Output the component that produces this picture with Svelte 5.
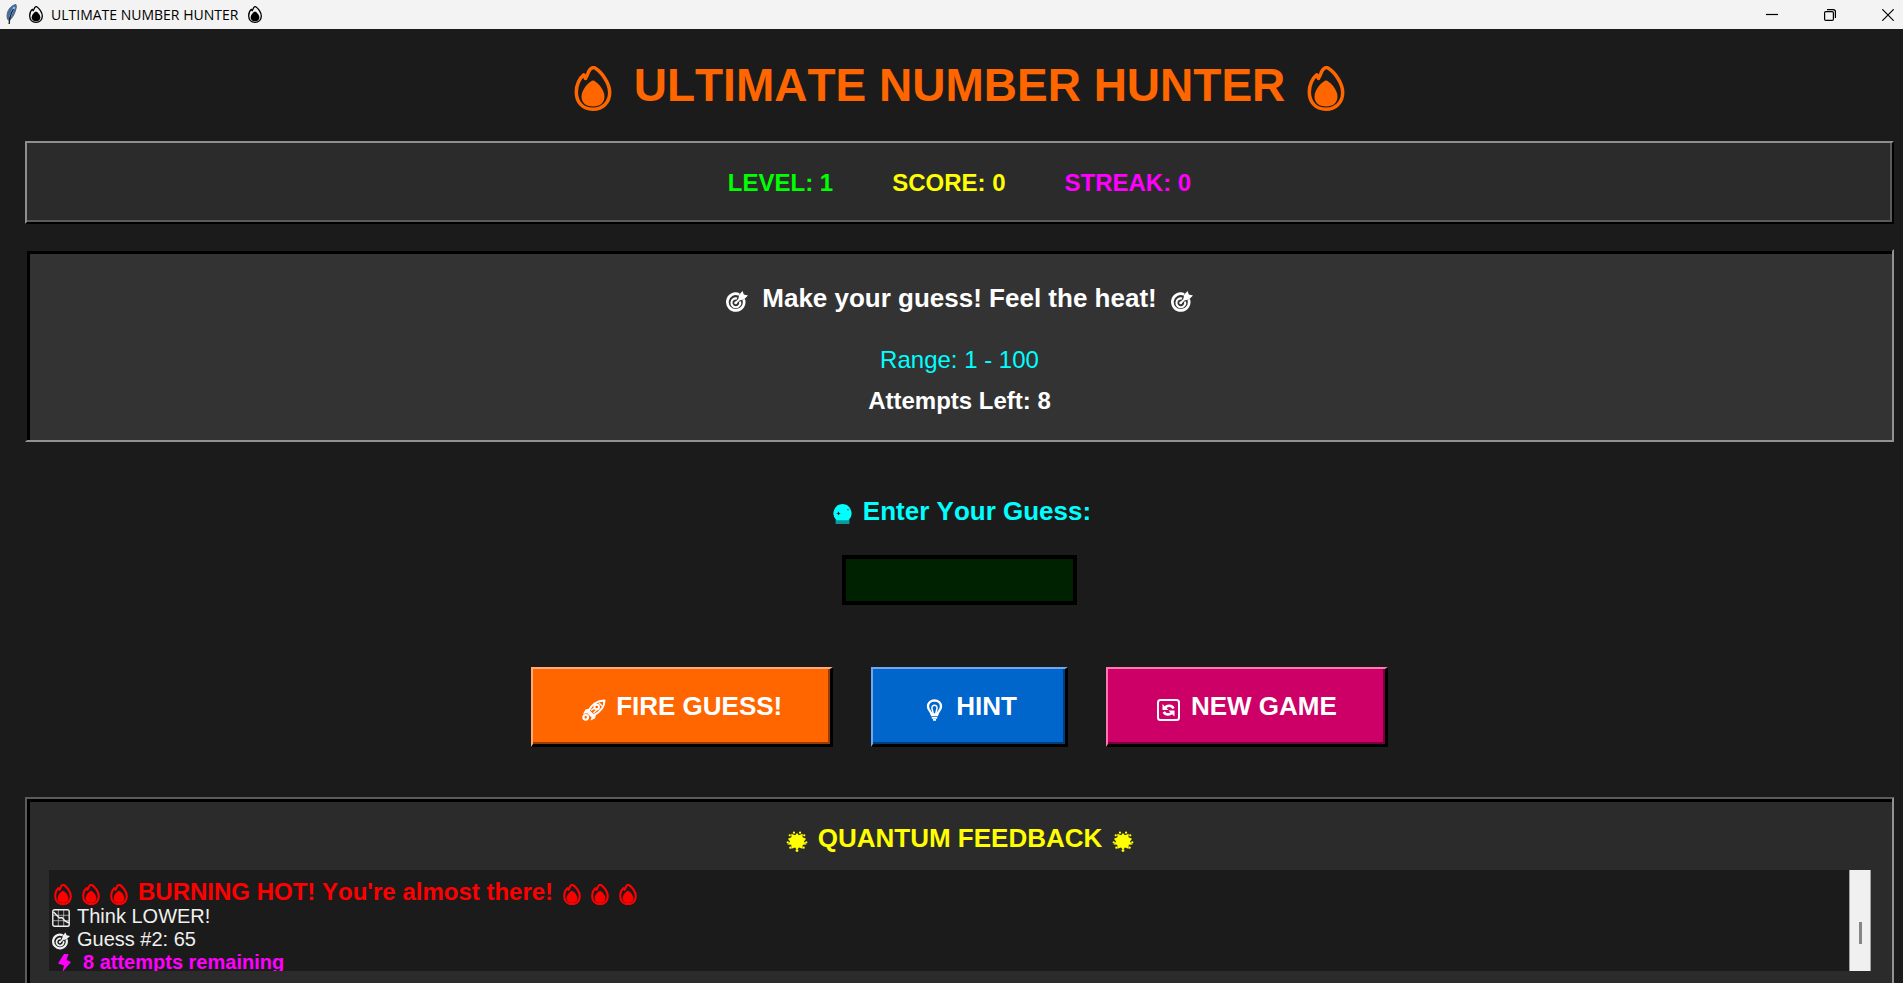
<script>
  let guess = $state('');
  const stats = [
    { label: 'LEVEL', value: 1, tone: 'green' },
    { label: 'SCORE', value: 0, tone: 'yellow' },
    { label: 'STREAK', value: 0, tone: 'magenta' }
  ];
</script>

{#snippet fire(size)}
  <svg class="icon {size}" viewBox="0 0 37 45" aria-hidden="true">
    <path class="outline" d="M18 1.800C15.500 2.500 14.200 5 13 8.500L11 12.500L9.200 8.800C5 12 1.800 19 1.800 26C1.800 36 8 43.200 18.400 43.200C28.500 43.200 35.200 36 35.200 26.500C35.200 17 27 6 20.500 2.100Q19 1.200 18 1.800Z" fill="none" stroke="currentColor" stroke-linejoin="round" />
    <path d="M18.500 14.500C16 14.500 7 22.500 7 30.500C7 36.500 11 40.500 18.500 40.500S30 36.500 30 30.500C30 22.500 21 14.500 18.500 14.500Z" fill="currentColor" />
  </svg>
{/snippet}

{#snippet target(size)}
  <svg class="icon {size}" viewBox="0 0 21 20" fill="none" stroke="currentColor" aria-hidden="true">
    <path d="M12.500 3.200A8 8 0 1 0 16.900 8" stroke-width="2.600" />
    <path d="M10.500 7.200A4.200 4.200 0 1 0 13.400 10" stroke-width="2" />
    <path d="M9.300 11.400L16 4.600" stroke-width="1.900" />
    <path d="M11.800 7.800L12.500 3.600L15.800 0L17 3.400L21 4.300L17.300 7.800L14 8.800Z" fill="currentColor" stroke="none" />
    <circle cx="9.200" cy="11.400" r="1.300" fill="currentColor" stroke="none" />
  </svg>
{/snippet}

{#snippet sun()}
  <svg class="icon medium" viewBox="0 0 22 22" aria-hidden="true">
    <path d="M11 2L13 4.500L17 2.800L16.800 6.600L20.500 8L18.200 11L21 14.200L17 14.500L16.800 18.500L13 17.300L11 20L9 17.300L5.200 18.500L5 14.500L1 14.200L3.800 11L1.500 8L5.200 6.600L5 2.800L9 4.500Z" fill="currentColor" />
    <g fill="currentColor">
      <circle cx="7.800" cy="1.800" r="1.200" /><circle cx="14.200" cy="1.800" r="1.200" />
      <circle cx="3.400" cy="4.500" r="1.200" /><circle cx="18.600" cy="4.500" r="1.200" />
      <circle cx="1.300" cy="12" r="1.200" /><circle cx="20.700" cy="12" r="1.200" />
      <circle cx="4" cy="17.500" r="1.200" /><circle cx="18" cy="17.500" r="1.200" />
      <circle cx="11" cy="20.500" r="1.500" />
    </g>
  </svg>
{/snippet}

<div class="window">
  <div class="titlebar">
    <svg class="feather" viewBox="0 0 11 21" aria-hidden="true">
      <path d="M10 .5C6 1 2 5 1.200 10C.8 13 1.200 15.500 2.800 16.500C7 14 9.500 8 10.300 3Z" fill="#3b6fae" stroke="#59616b" stroke-width="1" />
      <path d="M8.500 3C6.500 6 5.500 9 4 13" fill="none" stroke="#9cc6f4" stroke-width="2" />
      <path d="M7.500 5C5 9 3.500 13 3.200 20" fill="none" stroke="#20242a" stroke-width="1.400" />
    </svg>
    {@render fire('tiny')}
    <span>ULTIMATE NUMBER HUNTER</span>
    {@render fire('tiny')}
    <div class="controls">
      <button aria-label="Minimize"><svg viewBox="0 0 12 12"><path d="M0 5.500H12" /></svg></button>
      <button aria-label="Restore"><svg viewBox="0 0 12 12"><rect x=".6" y="2.600" width="8.800" height="8.800" rx="1.200" /><path d="M3 .6H9.200Q11.400 .6 11.400 2.800V9" /></svg></button>
      <button aria-label="Close"><svg viewBox="0 0 12 12"><path d="M.3 .3L11.700 11.700M11.700 .3L.3 11.700" /></svg></button>
    </div>
  </div>

  <main>
    <header>
      {@render fire('large')}
      <h1>ULTIMATE NUMBER HUNTER</h1>
      {@render fire('large')}
    </header>

    <section class="stats">
      {#each stats as s}
        <span class={s.tone}>{s.label}: {s.value}</span>
      {/each}
    </section>

    <section class="status">
      <h2>{@render target('medium')}<span>Make your guess! Feel the heat!</span>{@render target('medium')}</h2>
      <p class="range">Range: 1 - 100</p>
      <p class="attempts">Attempts Left: 8</p>
    </section>

    <form onsubmit={(e) => e.preventDefault()}>
      <label for="guess">
        <svg class="icon ball" viewBox="0 0 19 20" aria-hidden="true">
          <path d="M9.500 0A9.400 9.400 0 0 1 15.500 16.300H3.500A9.400 9.400 0 0 1 9.500 0Z" fill="currentColor" />
          <path d="M5.500 7.500L6.300 9L7.800 9.500L6.300 10L5.500 11.500L4.700 10L3.200 9.500L4.700 9ZM14.300 5.200h1.400v1h-1.400z" fill="#1b1b1b" />
          <path d="M2.600 15.500H16.400V20H2.600Z" fill="currentColor" opacity=".55" />
        </svg>
        <span>Enter Your Guess:</span>
      </label>
      <input id="guess" type="text" autocomplete="off" bind:value={guess} />
      <div class="actions">
        <button class="fire" type="submit">
          <svg class="icon action" viewBox="0 0 26 22" fill="none" stroke="currentColor" aria-hidden="true">
            <path d="M7.500 12C10 6 16 1.500 23.500 1.500C23.500 7.500 19 13 12.500 16.500Z" stroke-width="2" stroke-linejoin="round" />
            <path d="M9 9.500L4.500 10.500L2 15L7 14ZM15 15.500L14 19.500L9.500 21.500L11 17ZM8 11L13.500 16L10 18L6.500 14.500Z" fill="currentColor" stroke="none" />
            <circle cx="15.700" cy="8" r="2.300" stroke-width="1.900" />
            <path d="M10 11.500L14 8.500M12.500 14L17 9.500M18 4L21 7" stroke-width="1.400" />
            <circle cx="4.700" cy="18.300" r="2.300" stroke-width="2.200" />
          </svg>
          <span>FIRE GUESS!</span>
        </button>
        <button class="hint" type="button">
          <svg class="icon action" viewBox="0 0 26 22" fill="none" stroke="currentColor" aria-hidden="true">
            <path d="M10.500 15.500C10.500 12.500 7 11.500 7 7.500C7 4 9.800 1.500 13.500 1.500S20 4 20 7.500C20 11.500 16.500 12.500 16.500 15.500Z" stroke-width="2.300" stroke-linejoin="round" />
            <path d="M12.300 15L11 9.500A2.600 2.600 0 1 1 16 9.500L14.700 15" stroke-width="1.500" />
            <path d="M10 16.500H17M10.800 18.800H16.200M12 20.800H15" stroke-width="1.700" />
          </svg>
          <span>HINT</span>
        </button>
        <button class="new" type="button">
          <svg class="icon action" viewBox="0 0 26 22" fill="none" stroke="currentColor" aria-hidden="true">
            <rect x="2" y="1" width="21" height="20" rx="2.500" stroke-width="2" />
            <path d="M8.500 9.500C11 5.500 16 6 17.500 9.500M16.500 13C14 16.500 9.500 16 7.800 12.800" stroke-width="2.600" />
            <path d="M6.500 5V11H12.500ZM18.500 17.500V11.500H12.500Z" fill="currentColor" stroke="none" />
          </svg>
          <span>NEW GAME</span>
        </button>
      </div>
    </form>

    <section class="feedback">
      <h2>{@render sun()}<span>QUANTUM FEEDBACK</span>{@render sun()}</h2>
      <div class="logbox">
        <div class="log">
          <p class="hot">
            {@render fire('small')}{@render fire('small')}{@render fire('small')}
            <span>BURNING HOT! You're almost there!</span>
            {@render fire('small')}{@render fire('small')}{@render fire('small')}
          </p>
          <p>
            <svg class="icon line" viewBox="0 0 18 18" fill="none" stroke="currentColor" aria-hidden="true">
              <rect x=".8" y=".8" width="16.400" height="16.400" rx="1.800" stroke-width="1.400" />
              <path d="M6.300 1V17M11.700 1V17M1 6.300H17M1 11.700H17" stroke-width=".8" opacity=".75" />
              <path d="M1.500 3L7.500 9L10 8.500L13 12L17 14" stroke-width="1.500" />
            </svg>
            <span>Think LOWER!</span>
          </p>
          <p>{@render target('line')}<span>Guess #2: 65</span></p>
          <p class="remaining">
            <svg class="icon bolt" viewBox="0 0 13 18" aria-hidden="true"><path d="M6 0H10.500L8.500 6L13 8L4.500 18L6 11.500L0 9.500Z" fill="currentColor" /></svg>
            <span>8 attempts remaining</span>
          </p>
        </div>
        <div class="scrollbar"><div class="thumb"></div></div>
      </div>
    </section>
  </main>
</div>

<style>
  :global(body) { margin: 0; overflow: hidden; background: #1b1b1b; }
  * { box-sizing: border-box; }
  h1, h2, p { margin: 0; }
  button { font: inherit; }
  .window {
    display: flex; flex-direction: column; height: 100vh;
    font-family: "Liberation Sans", Arial, sans-serif; font-kerning: none;
    color: #fff; background: #1b1b1b;
  }
  .titlebar {
    display: flex; align-items: center; flex: none; height: 29px; padding-left: 6px;
    background: #f3f3f3; color: #000; font: 14px "Open Sans", "Segoe UI", sans-serif;
  }
  .titlebar span { margin: 0 10px 0 8px; }
  .feather { width: 11px; height: 21px; margin-right: 12px; }
  .controls { display: flex; gap: 46px; margin-left: auto; padding-right: 9px; }
  .controls button { display: flex; padding: 0; border: 0; background: none; }
  .controls svg { width: 12px; height: 12px; fill: none; stroke: #000; stroke-width: 1.2; }

  main { display: flex; flex-direction: column; flex: 1; min-height: 0; padding: 0 9px 0 25px; }
  header { display: flex; align-items: center; justify-content: center; gap: 22px; height: 112px; color: #ff6600; }
  h1 { font-size: 46px; line-height: 56px; }
  h2, label { display: flex; align-items: center; justify-content: center; gap: 11px; font-size: 26px; font-weight: bold; line-height: 36px; }

  .icon { flex: none; display: block; margin-top: 6px; }
  .outline { stroke-width: 3.5; }
  .tiny { width: 14px; height: 17px; margin-top: 0; }
  .large { width: 38px; height: 45px; }
  .medium { width: 22px; height: 21px; }
  .small { width: 18px; height: 21px; }
  .small .outline { stroke-width: 4.5; }
  .ball { width: 19px; height: 20px; }
  .action { width: 26px; height: 22px; }
  .line { width: 18px; height: 18px; margin-top: 3px; }
  .bolt { width: 13px; height: 18px; margin: 0 7px 0 6px; }

  .stats {
    display: flex; justify-content: center; align-items: center; gap: 59px; height: 83px; padding-top: 1px;
    border: 2px solid; border-color: #8e8e8e #000 #000 #8e8e8e;
    box-shadow: inset -2px -2px #5b5b5b; background: #2b2b2b;
    font-size: 24px; font-weight: bold;
  }
  .green { color: #00ff00; }
  .yellow { color: #ffff00; }
  .magenta { color: #ff00ff; }

  .status {
    margin-top: 25px; padding: 29px 0 21px; text-align: center;
    border: 2px solid; border-color: #1b1b1b #929292 #929292 #1b1b1b;
    box-shadow: inset 3px 3px #000; background: #333;
    font-size: 24px; line-height: 36px;
  }
  .status h2 { gap: 14px; }
  .range { margin: 26px 0 5px; color: #00ffff; }
  .attempts { font-weight: bold; }

  form { display: flex; flex-direction: column; align-items: center; padding: 51px 0 50px; }
  label { padding-left: 5px; color: #00ffff; }
  input {
    width: 235px; height: 50px; margin: 26px 0 62px; padding: 0 8px;
    border: 4px solid #000; border-radius: 0; outline: 0; background: #002200;
    color: #00ff00; font: bold 26px "Liberation Sans", sans-serif; text-align: center;
  }
  .actions { display: flex; gap: 38px; }
  .actions button {
    display: flex; align-items: center; gap: 9px; height: 80px; padding: 0 48px;
    border: 3px solid; border-width: 2px 3px 3px 2px; color: #fff; font-size: 26px; font-weight: bold;
  }
  .actions .fire { background: #ff6600; border-color: #ffaa77 #000 #000 #ffaa77; box-shadow: inset -2px -2px #993d00; }
  .actions .hint { background: #0066cc; border-color: #6fa8f0 #000 #000 #6fa8f0; box-shadow: inset -2px -2px #003d7a; }
  .actions .new { background: #cc0066; border-color: #ff77b0 #000 #000 #ff77b0; box-shadow: inset -2px -2px #7a003d; }

  .feedback {
    display: flex; flex-direction: column; flex: 1; min-height: 0; padding: 21px 21px 12px 22px;
    border: 2px solid; border-color: #5b5b5b #929292 #929292 #5b5b5b; border-bottom: 0;
    box-shadow: inset 3px 3px #000; background: #2b2b2b;
  }
  .feedback h2 { gap: 10px; color: #ffff00; margin-bottom: 14px; }
  .logbox { display: flex; flex: 1; min-height: 0; }
  .log { flex: 1; overflow: hidden; padding: 8px 3px 0; background: #1b1b1b; color: #f0f0f0; }
  .log p { display: flex; align-items: center; gap: 7px; font-size: 20px; line-height: 23px; height: 23px; white-space: nowrap; }
  .log .hot { gap: 10px; height: 27px; padding-left: 2px; color: #ff0000; font-size: 24px; font-weight: bold; line-height: 27px; }
  .log .remaining { gap: 5px; color: #ff00ff; font-weight: bold; }
  .scrollbar { width: 22px; padding: 52px 9px 0 9px; border-left: 1px solid #a0a0a0; border-right: 1px solid #a0a0a0; background: #f0f0f0; }
  .thumb { width: 3px; height: 22px; background: #858585; }
</style>
